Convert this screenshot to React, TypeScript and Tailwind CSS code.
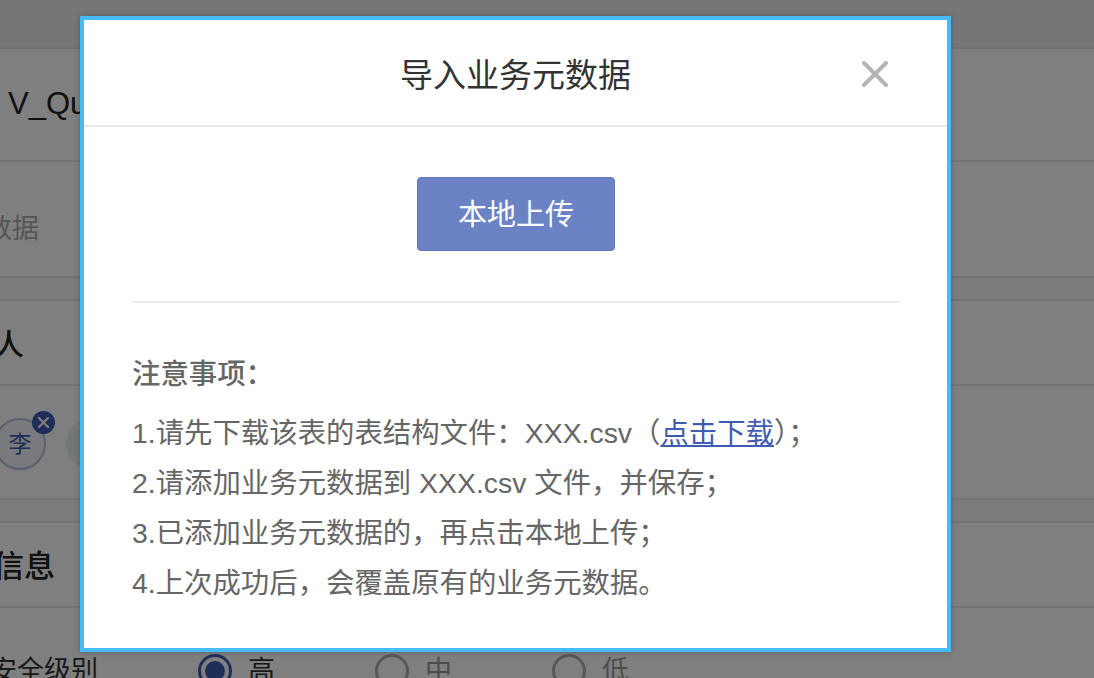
const sans = "font-['Liberation_Sans','Noto_Sans_CJK_SC',sans-serif]";

function Radio({ label, checked }: { label: string; checked?: boolean }) {
  return (
    <div className="flex items-center gap-[16px] w-[177px] shrink-0">
      <span
        className={`w-[34px] h-[34px] rounded-full border-[3px] bg-white flex items-center justify-center ${checked ? "border-[#3f5cb0]" : "border-[#b0b0b0]"}`}
      >
        {checked && <span className="w-[20px] h-[20px] rounded-full bg-[#3f5cb0]" />}
      </span>
      <span className={`text-[27px] ${checked ? "text-[#333]" : "text-[#999]"}`}>{label}</span>
    </div>
  );
}

function BackgroundPage() {
  return (
    <div className="w-full h-full overflow-hidden bg-white text-[#333]">
      <div className="h-[49px] bg-[#ececec] border-b-2 border-[#e0e0e0]" />
      <div className="h-[113px] flex items-center pl-[8px] border-b-2 border-[#e4e4e4] text-[31px] text-[#222]">
        V_Query
      </div>
      <div className="h-[116px] flex items-center pt-[20px] border-b-2 border-[#e4e4e4] text-[27px] text-[#aaa] whitespace-nowrap">
        <span className="-ml-[15px]">数据</span>
      </div>
      <div className="h-[23px] bg-[#f8f8f8] border-b-2 border-[#e4e4e4]" />
      <div className="h-[85px] flex items-center pt-[4px] border-b-2 border-[#e4e4e4] text-[30px] text-[#222] font-medium">
        <span className="-ml-[6px]">人</span>
      </div>
      <div className="h-[114px] flex items-center gap-[20px] border-b-2 border-[#e4e4e4] -ml-[6px] pt-[4px]">
        <div className="relative w-[52px] h-[52px] rounded-full border-2 border-[#b5c0e0] bg-[#f2f4fb] flex items-center justify-center text-[23px] text-[#3f5cb0]">
          李
          <span className="absolute -top-[9px] -right-[11px] w-[23px] h-[23px] rounded-full bg-[#3f5cb0] flex items-center justify-center">
            <svg width="13" height="13" viewBox="0 0 13 13" stroke="white" strokeWidth="2.2" strokeLinecap="round">
              <path d="M2 2l9 9M11 2l-9 9" />
            </svg>
          </span>
        </div>
        <div className="w-[52px] h-[52px] rounded-full bg-[#e6f0e6]" />
      </div>
      <div className="h-[23px] bg-[#f8f8f8] border-b-2 border-[#e4e4e4]" />
      <div className="h-[85px] flex items-center pt-[6px] border-b-2 border-[#e4e4e4] text-[31px] text-[#222] font-medium whitespace-nowrap">
        <span className="-ml-[7px]">信息</span>
      </div>
      <div className="flex items-center pt-[43px] text-[27px] whitespace-nowrap -ml-[10px]">
        <span className="w-[208px] shrink-0">安全级别</span>
        <Radio label="高" checked />
        <Radio label="中" />
        <Radio label="低" />
      </div>
    </div>
  );
}

export default function App() {
  return (
    <div className={`relative w-[1094px] h-[678px] overflow-hidden ${sans}`}>
      <BackgroundPage />
      <div className="absolute inset-0 bg-black/50" />
      <div className="absolute left-[80px] top-[16px] w-[871px] h-[636px] border-4 border-[#45bcf8] bg-white flex flex-col shadow-[0_0_6px_rgba(0,0,0,0.25)]">
        <div className="h-[107px] shrink-0 relative flex items-center justify-center border-b-2 border-[#e8e8e8]">
          <span className="text-[33px] leading-none text-[#333] pt-[6px]">导入业务元数据</span>
          <button className="absolute left-[778px] top-[41px]">
            <svg width="26" height="26" viewBox="0 0 26 26" stroke="#b5b5b5" strokeWidth="4" strokeLinecap="round" className="block">
              <path d="M2 2l22 22M24 2L2 24" />
            </svg>
          </button>
        </div>
        <div className="flex-1 pl-[48px] pr-[47px]">
          <div className="h-[176px] flex items-start justify-center pt-[50px] border-b-2 border-[#ececec]">
            <button className="w-[198px] h-[74px] rounded-[4px] bg-[#6b83c4] border border-[#5f78bc] text-white text-[29px] pt-[3px]">
              本地上传
            </button>
          </div>
          <div className="pt-[46px] text-[#666]">
            <div className="text-[28.4px] leading-[50px] font-medium">注意事项：</div>
            <div className="mt-[9px] text-[28.4px] leading-[50px] whitespace-nowrap">
              <div>
                1.请先下载该表的表结构文件：XXX.csv（<a className="text-[#3f5cb0] underline">点击下载</a>）；
              </div>
              <div>2.请添加业务元数据到 XXX.csv 文件，并保存；</div>
              <div>3.已添加业务元数据的，再点击本地上传；</div>
              <div>4.上次成功后，会覆盖原有的业务元数据。</div>
            </div>
          </div>
        </div>
      </div>
    </div>
  );
}
